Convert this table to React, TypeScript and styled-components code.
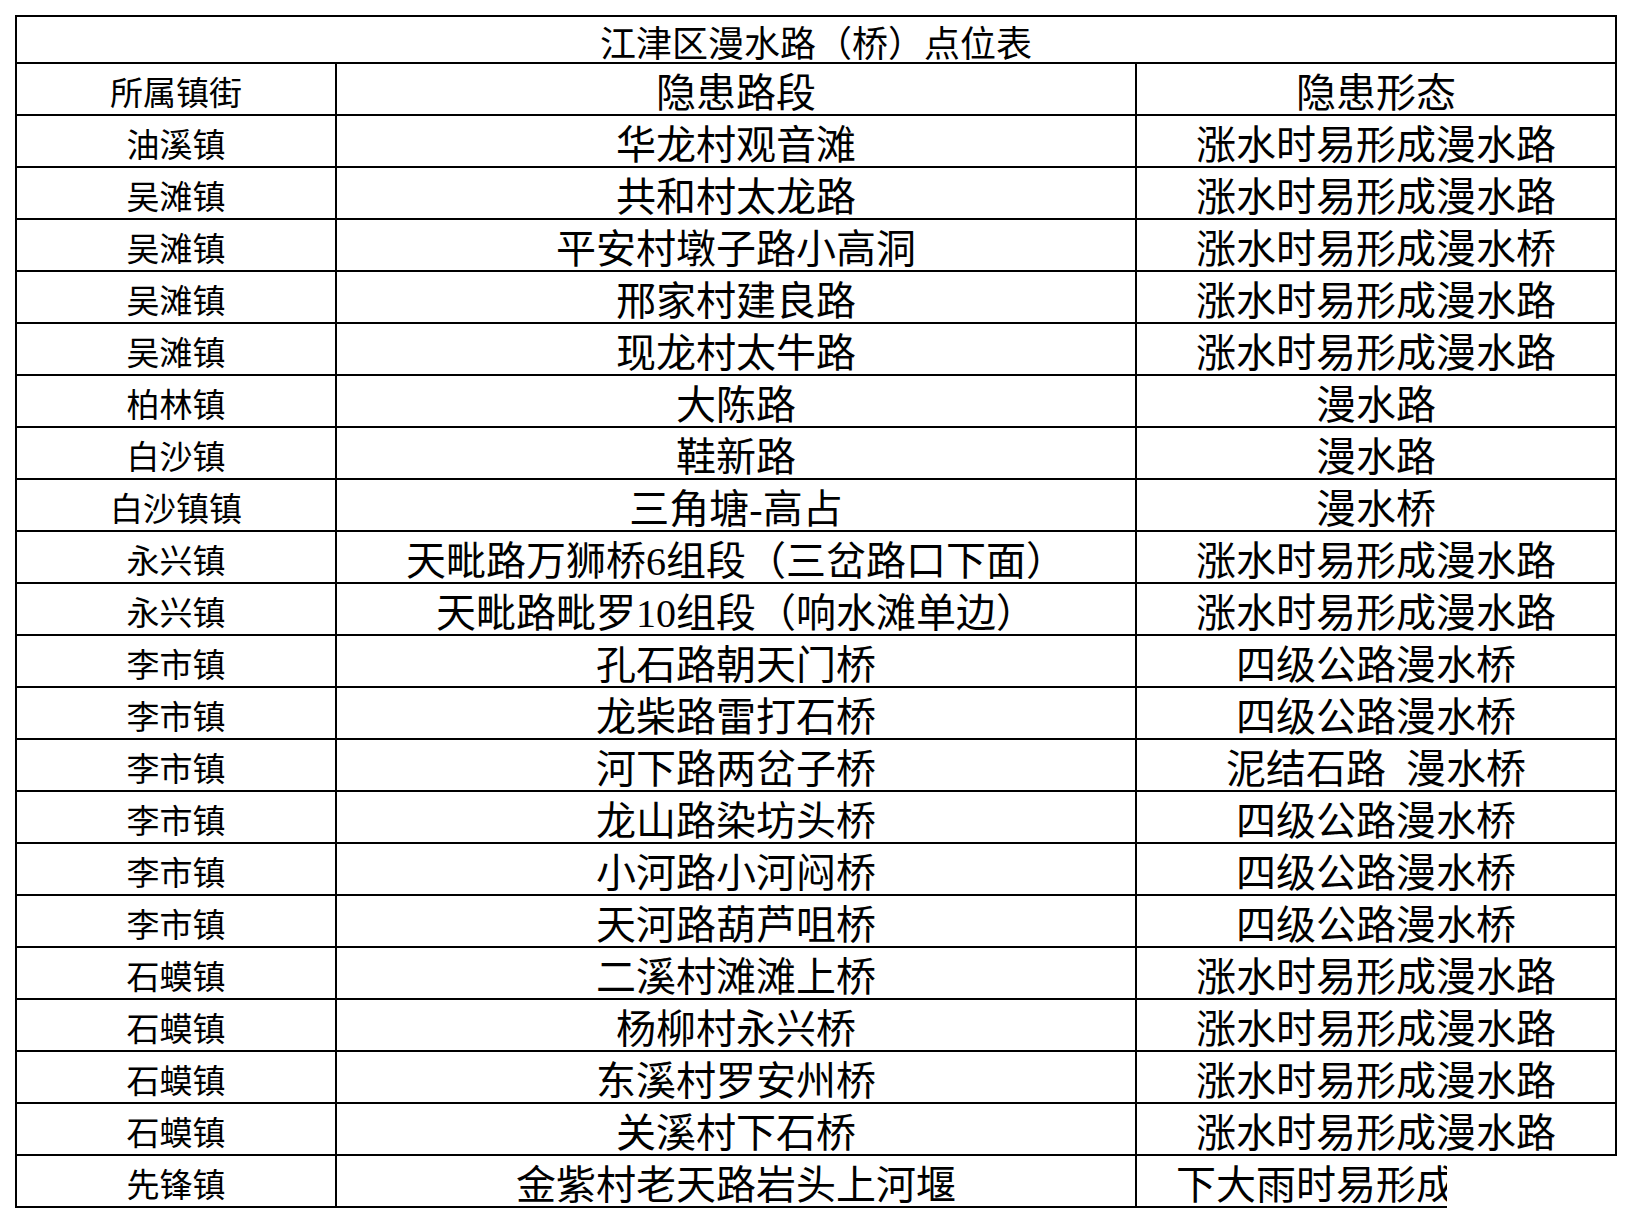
import React from 'react'
import styled, { createGlobalStyle } from 'styled-components'

const GlobalStyle = createGlobalStyle`
	html, body {
		margin: 0;
		padding: 0;
		background: #fff;
	}
	body {
		font-family: 'Liberation Serif', 'Noto Sans CJK SC', serif;
		color: #000;
	}
`

type Row = [string, string, string]

const rows: Row[] = [
	['油溪镇', '华龙村观音滩', '涨水时易形成漫水路'],
	['吴滩镇', '共和村太龙路', '涨水时易形成漫水路'],
	['吴滩镇', '平安村墩子路小高洞', '涨水时易形成漫水桥'],
	['吴滩镇', '邢家村建良路', '涨水时易形成漫水路'],
	['吴滩镇', '现龙村太牛路', '涨水时易形成漫水路'],
	['柏林镇', '大陈路', '漫水路'],
	['白沙镇', '鞋新路', '漫水路'],
	['白沙镇镇', '三角塘-高占', '漫水桥'],
	['永兴镇', '天毗路万狮桥6组段（三岔路口下面）', '涨水时易形成漫水路'],
	['永兴镇', '天毗路毗罗10组段（响水滩单边）', '涨水时易形成漫水路'],
	['李市镇', '孔石路朝天门桥', '四级公路漫水桥'],
	['李市镇', '龙柴路雷打石桥', '四级公路漫水桥'],
	['李市镇', '河下路两岔子桥', '泥结石路  漫水桥'],
	['李市镇', '龙山路染坊头桥', '四级公路漫水桥'],
	['李市镇', '小河路小河闷桥', '四级公路漫水桥'],
	['李市镇', '天河路葫芦咀桥', '四级公路漫水桥'],
	['石蟆镇', '二溪村滩滩上桥', '涨水时易形成漫水路'],
	['石蟆镇', '杨柳村永兴桥', '涨水时易形成漫水路'],
	['石蟆镇', '东溪村罗安州桥', '涨水时易形成漫水路'],
	['石蟆镇', '关溪村下石桥', '涨水时易形成漫水路'],
]

const lastRow: Row = ['先锋镇', '金紫村老天路岩头上河堰', '下大雨时易形成漫水路']

const Sheet = styled.div`
	display: grid;
	grid-template-columns: 320px 800px 480px;
	grid-template-rows: 47px;
	grid-auto-rows: 52px;
	width: max-content;
	margin: 15px 0 0 15px;
	border-top: 2px solid #000;
	border-left: 2px solid #000;
`

const Cell = styled.div<{ $size?: number }>`
	box-sizing: border-box;
	display: flex;
	align-items: center;
	justify-content: center;
	padding-top: 10px;
	border-right: 2px solid #000;
	border-bottom: 2px solid #000;
	font-size: ${(p) => p.$size ?? 40}px;
	line-height: 1;
	white-space: pre;
	overflow: hidden;
`

const Title = styled(Cell)`
	grid-column: 1 / -1;
`

// the last cell of the sheet is cut off on the right, as in the print
const OpenCell = styled.div`
	display: flex;
	align-items: stretch;
`

const Clip = styled.div`
	box-sizing: border-box;
	width: 310px;
	border-bottom: 2px solid #000;
	overflow: hidden;
`

const Spill = styled.div`
	display: flex;
	align-items: center;
	justify-content: center;
	width: 478px;
	height: 100%;
	padding-top: 10px;
	box-sizing: border-box;
	font-size: 40px;
	line-height: 1;
	white-space: pre;
`

export default function App() {
	return (
		<>
			<GlobalStyle />
			<Sheet>
				<Title $size={36}>江津区漫水路（桥）点位表</Title>
				<Cell $size={33}>所属镇街</Cell>
				<Cell>隐患路段</Cell>
				<Cell>隐患形态</Cell>
				{rows.map(([town, road, kind], i) => (
					<React.Fragment key={i}>
						<Cell $size={33}>{town}</Cell>
						<Cell>{road}</Cell>
						<Cell>{kind}</Cell>
					</React.Fragment>
				))}
				<Cell $size={33}>{lastRow[0]}</Cell>
				<Cell>{lastRow[1]}</Cell>
				<OpenCell>
					<Clip>
						<Spill>{lastRow[2]}</Spill>
					</Clip>
				</OpenCell>
			</Sheet>
		</>
	)
}
